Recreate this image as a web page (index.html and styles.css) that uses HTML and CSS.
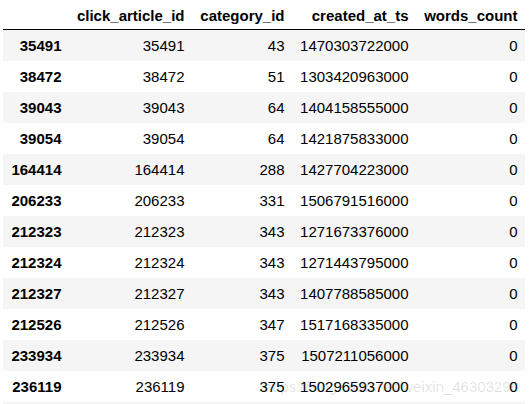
FILE: index.html
```html
<!DOCTYPE html>
<html>
<head>
<meta charset="utf-8">
<link rel="stylesheet" href="styles.css">
</head>
<body>
<div class="frame">
<table class="df">
  <thead>
    <tr>
      <th class="c-idx"></th>
      <th class="c-click">click_article_id</th>
      <th class="c-cat">category_id</th>
      <th class="c-ts">created_at_ts</th>
      <th class="c-wc">words_count</th>
    </tr>
  </thead>
  <tbody>
    <tr><th>35491</th><td>35491</td><td>43</td><td>1470303722000</td><td>0</td></tr>
    <tr><th>38472</th><td>38472</td><td>51</td><td>1303420963000</td><td>0</td></tr>
    <tr><th>39043</th><td>39043</td><td>64</td><td>1404158555000</td><td>0</td></tr>
    <tr><th>39054</th><td>39054</td><td>64</td><td>1421875833000</td><td>0</td></tr>
    <tr><th>164414</th><td>164414</td><td>288</td><td>1427704223000</td><td>0</td></tr>
    <tr><th>206233</th><td>206233</td><td>331</td><td>1506791516000</td><td>0</td></tr>
    <tr><th>212323</th><td>212323</td><td>343</td><td>1271673376000</td><td>0</td></tr>
    <tr><th>212324</th><td>212324</td><td>343</td><td>1271443795000</td><td>0</td></tr>
    <tr><th>212327</th><td>212327</td><td>343</td><td>1407788585000</td><td>0</td></tr>
    <tr><th>212526</th><td>212526</td><td>347</td><td>1517168335000</td><td>0</td></tr>
    <tr><th>233934</th><td>233934</td><td>375</td><td>1507211056000</td><td>0</td></tr>
    <tr><th>236119</th><td>236119</td><td>375</td><td>1502965937000</td><td>0</td></tr>
    <tr><th>&nbsp;</th><td>&nbsp;</td><td>&nbsp;</td><td>&nbsp;</td><td>&nbsp;</td></tr>
  </tbody>
</table>
<div class="watermark">https://blog.csdn.net/weixin_46303290</div>
</div>
</body>
</html>
```

FILE: styles.css
```css
html, body {
  margin: 0;
  padding: 0;
  background: #ffffff;
  overflow: hidden;
}

.frame {
  position: relative;
  width: 530px;
  height: 404px;
  overflow: hidden;
  padding-left: 3px;
  box-sizing: border-box;
}

.df {
  border-collapse: collapse;
  border-spacing: 0;
  table-layout: fixed;
  width: 522px;
  font-family: "Liberation Sans", Arial, sans-serif;
  font-size: 15px;
  color: #000000;
}

.df th,
.df td {
  box-sizing: border-box;
  text-align: right;
  vertical-align: middle;
  padding: 7px 7.5px;
  line-height: 17px;
  white-space: nowrap;
  border: none;
}

.df thead {
  border-bottom: 1px solid #000000;
}

.df thead th {
  padding-top: 7px;
  padding-bottom: 5px;
  font-weight: bold;
}

.df tbody th {
  font-weight: bold;
}

.df td {
  font-weight: normal;
}

.df tbody tr:nth-child(odd) {
  background: #f5f5f5;
}

.c-idx { width: 66px; }
.c-click { width: 123px; }
.c-cat { width: 100px; }
.c-ts { width: 124px; }
.c-wc { width: 109px; }

.watermark {
  position: absolute;
  right: 11px;
  top: 378px;
  font-family: "Liberation Sans", Arial, sans-serif;
  font-size: 15px;
  line-height: 17px;
  color: rgba(0, 0, 0, 0.13);
  white-space: nowrap;
}
```
